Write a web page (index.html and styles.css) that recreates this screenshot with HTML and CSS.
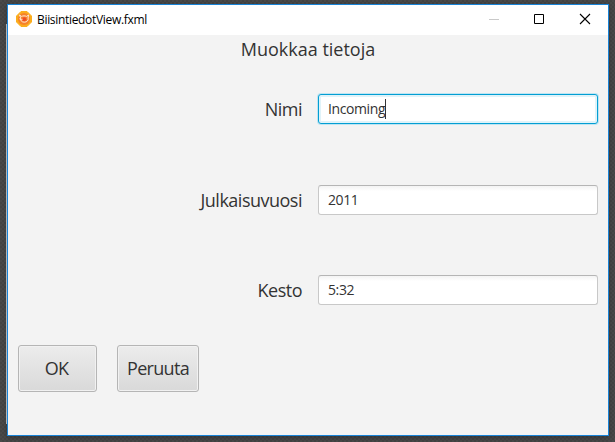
FILE: index.html
```html
<!DOCTYPE html>
<html lang="fi">
<head>
<meta charset="utf-8">
<title>BiisintiedotView.fxml</title>
<link rel="stylesheet" href="styles.css">
</head>
<body>
<div class="window">
  <header class="titlebar">
    <svg class="app-icon" width="16" height="16" viewBox="0 0 16 16">
      <path d="M5 .5h6L15.500 5v6L11 15.500H5L.5 11V5z" fill="#fbad1c" stroke="#fbad1c" stroke-linejoin="round"/>
      <circle cx="8" cy="8" r="6" fill="#f6822a"/>
      <circle cx="8.200" cy="8.200" r="2" fill="#f04a23"/>
      <path d="M3.500 4l2 1.400c1.500-.7 3.500-.7 5 0l2-1.400-.4 3c.6 2.500-1.200 4.200-3.800 4.200-2.700 0-4.300-2-3.600-4.300z" fill="none" stroke="#fff0e4" stroke-width=".9"/>
      <path d="M3.200 7.500c1 1.200 2 1.200 3.400.8" fill="none" stroke="#fff0e4" stroke-width=".8"/>
    </svg>
    <h1 class="title">BiisintiedotView.fxml</h1>
    <div class="controls">
      <svg width="46" height="30" viewBox="0 0 46 30"><path d="M18 14.500h10" stroke="#c9c9c9"/></svg>
      <svg width="45" height="30" viewBox="0 0 45 30"><path d="M17.500 9.500h9v9h-9z" fill="none" stroke="#000"/></svg>
      <svg width="46" height="30" viewBox="0 0 46 30"><path d="M18 9l10 10M28 9L18 19" stroke="#000" stroke-width="1.100"/></svg>
    </div>
  </header>
  <main class="content">
    <h2 class="heading">Muokkaa tietoja</h2>
    <div class="form">
      <span class="label">Nimi</span><div class="field focused"><span>Incoming</span><i class="caret"></i></div>
      <span class="label">Julkaisuvuosi</span><div class="field"><span>2011</span></div>
      <span class="label">Kesto</span><div class="field"><span>5:32</span></div>
    </div>
    <div class="actions">
      <button class="button ok">OK</button>
      <button class="button cancel">Peruuta</button>
    </div>
  </main>
</div>
</body>
</html>
```
FILE: styles.css
```css
* { box-sizing: border-box; }
body {
  margin: 0;
  height: 442px;
  overflow: hidden;
  padding: 4px 0 0 7px;
  background: repeating-conic-gradient(#444 0 25%, #4a4a4a 0 50%) 0 0 / 4px 4px;
  font-family: "Open Sans", "Noto Sans", sans-serif;
  color: #333;
}
.window {
  position: relative;
  width: 602px;
  height: 432px;
  border: 1px solid #1883d7;
  background: #f3f3f3;
  box-shadow: 0 2px 6px rgba(0, 0, 0, .25);
}
.window::before {
  content: "";
  position: absolute;
  left: -2px;
  top: 19px;
  width: 1px;
  height: 400px;
  background: #b5b5b5;
}
.titlebar {
  display: flex;
  align-items: center;
  height: 30px;
  padding-left: 8px;
  background: #fff;
}
.app-icon { margin-top: -2px; }
.title {
  margin: -1px 0 0 5px;
  font-size: 12px;
  font-weight: 400;
  letter-spacing: -.32px;
  color: #000;
}
.controls { display: flex; margin-left: auto; }
.heading {
  margin: 0;
  height: 29px;
  font-size: 18px;
  font-weight: 400;
  line-height: 29px;
  text-align: center;
}
.form {
  display: grid;
  grid-template-columns: 294px 280px;
  column-gap: 16px;
  grid-template-rows: 30px 30px 30px;
  row-gap: 60.500px;
  margin-top: 30px;
}
.label {
  font-size: 18px;
  line-height: 30px;
  letter-spacing: -.5px;
  text-align: right;
}
.field {
  display: flex;
  align-items: center;
  padding-left: 9px;
  border: 1px solid #c8c8c8;
  border-top-color: #b5b5b5;
  border-radius: 3px;
  background: linear-gradient(#f3f3f3, #fff 5px);
  font-size: 14px;
  letter-spacing: -.4px;
}
.field span { margin-top: -1px; }
.focused {
  border-color: #039ed3;
  background: #fff;
  box-shadow: 0 0 0 1px #bfe5f2, inset 0 0 0 2px #e0f3f9;
}
.caret { width: 1px; height: 20px; background: #333; }
.actions { display: flex; gap: 20px; margin: 40px 0 0 10px; }
.button {
  height: 47px;
  padding: 0 0 2px;
  border: 1px solid #b5b5b5;
  border-radius: 3px;
  background: linear-gradient(#ececec, #d9d9d9);
  box-shadow: inset 0 0 0 1px #f1f1f1;
  font: 18px "Open Sans", sans-serif;
  letter-spacing: -.7px;
  color: #333;
}
.ok { width: 79px; padding-right: 2px; }
.cancel { width: 82px; }
```
